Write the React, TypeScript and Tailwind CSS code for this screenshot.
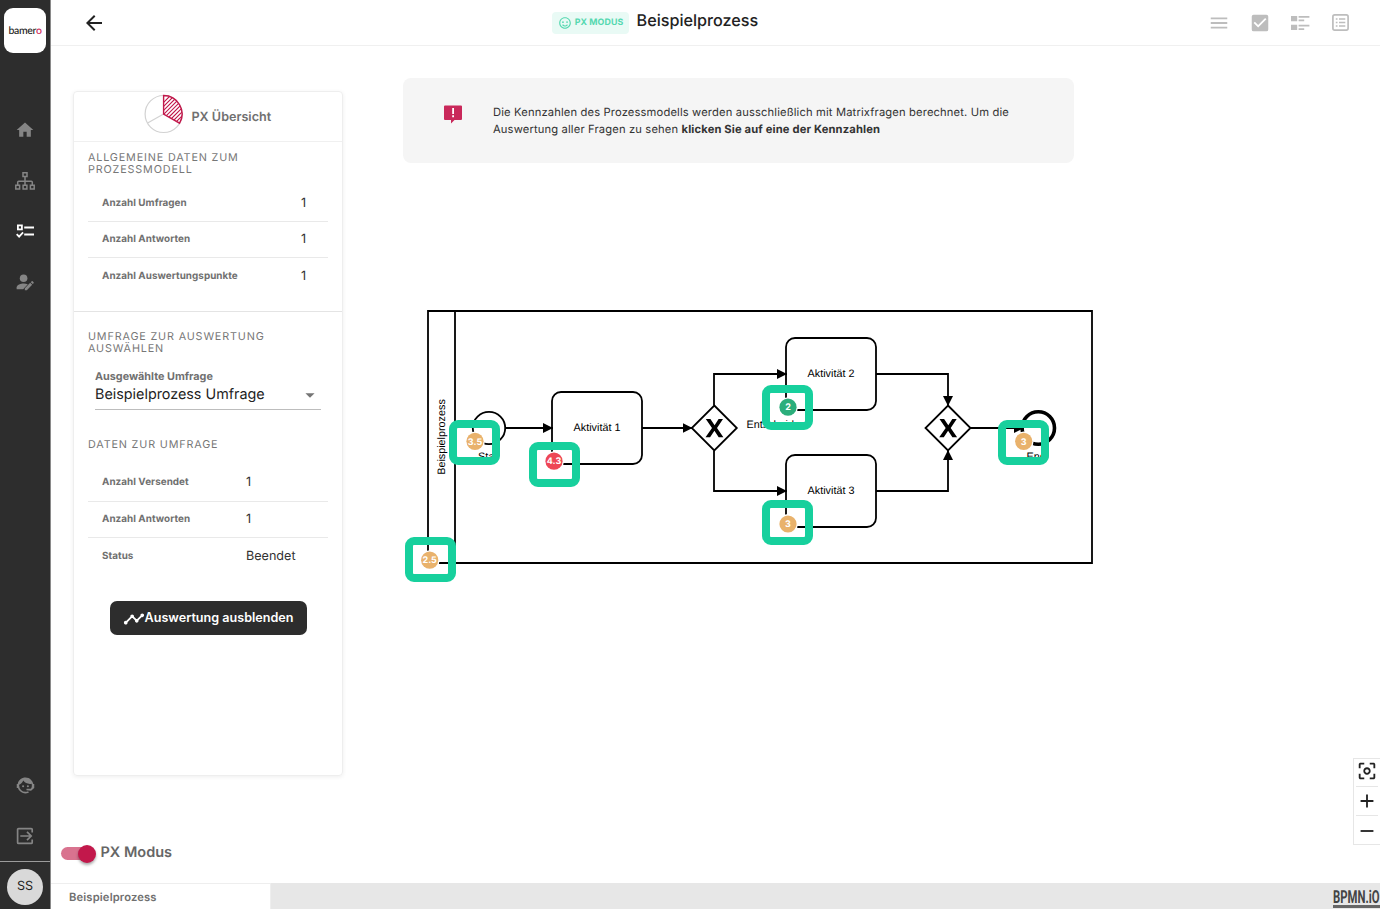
import React from "react";
import {
  MdArrowBack, MdMenu, MdCheckBox, MdHome, MdTimeline,
  MdCenterFocusWeak, MdAdd, MdRemove, MdArrowDropDown,
} from "react-icons/md";
import { BiSmile } from "react-icons/bi";

function SitemapIcon() {
  return (
    <svg width="20" height="18" viewBox="0 0 20 18" fill="none" stroke="currentColor" strokeWidth="1.500">
      <path d="M8 .8h4v3.800H8zM.8 13.300h3.800v3.800H.8zM8.100 13.300h3.800v3.800H8.100zM15.400 13.300h3.800v3.800h-3.800z" />
      <path d="M10 4.600v8.700M2.700 13.300V10.200c0-.6.4-1 1-1h12.600c.6 0 1 .4 1 1v3.100" />
    </svg>
  );
}

function AgentIcon() {
  return (
    <svg width="21" height="21" viewBox="0 0 24 24" fill="currentColor">
      <path d="M18.720 14.760C19.070 13.910 19.260 13 19.260 12C19.260 11.280 19.150 10.590 18.960 9.950C18.310 10.100 17.630 10.180 16.920 10.180C13.860 10.180 11.150 8.670 9.500 6.340C8.610 8.500 6.910 10.260 4.770 11.220C4.730 11.470 4.730 11.740 4.730 12A7.270 7.270 0 0 0 12 19.270C13.050 19.270 14.060 19.040 14.970 18.630C15.540 19.720 15.800 20.260 15.780 20.260C14.140 20.810 12.870 21.080 12 21.080C9.580 21.080 7.270 20.130 5.570 18.420C4.530 17.380 3.760 16.110 3.330 14.730H2V10.180H3.090C3.930 6.040 7.600 2.920 12 2.920C14.400 2.920 16.710 3.870 18.420 5.580C19.690 6.840 20.540 8.450 20.890 10.180H22V14.730H21.940L18.380 18L13.080 17.400V15.730H17.910L18.720 14.760Z" />
      <circle cx="9.270" cy="12.910" r="1.200" />
      <circle cx="14.720" cy="12.910" r="1.200" />
    </svg>
  );
}

function ChecklistIcon() {
  return (
    <svg width="18" height="15" viewBox="0 0 18 15" fill="none" stroke="currentColor" className="text-white">
      <rect x="1.9" y="1.4" width="4" height="4" strokeWidth="1.8" />
      <path d="M8.2 3.4H18M8.2 10.6H18" strokeWidth="2" />
      <path d="M.7 10.2l2.4 2.4 4-4.3" strokeWidth="1.8" />
    </svg>
  );
}

function UserEditIcon() {
  return (
    <svg width="18" height="17" viewBox="0 0 18 17" fill="currentColor">
      <circle cx="7.6" cy="4.3" r="3.8" />
      <path d="M.6 15.2v-1.6C.6 10.700 5 9.400 7.600 9.400c1.300 0 2.900.3 4.200.9L7.200 15.200z" />
      <path d="M8.800 14.200l5.400-5.400 2 2-5.400 5.400h-2zM14.800 8.200l.9-.9c.3-.3.6-.3.9 0l1 1c.3.3.3.6 0 .9l-.9.9z" />
    </svg>
  );
}

function LogoutIcon() {
  return (
    <svg width="18" height="18" viewBox="0 0 18 18" fill="none" stroke="currentColor" strokeWidth="1.7">
      <path d="M16.200 5.500V2.600a1 1 0 0 0-1-1H2.600a1 1 0 0 0-1 1v12.800a1 1 0 0 0 1 1h12.600a1 1 0 0 0 1-1v-2.900" />
      <path d="M4.300 9H15M11 4.800L15.200 9 11 13.200" />
    </svg>
  );
}

function DetailListIcon() {
  return (
    <svg width="19" height="16" viewBox="0 0 19 16" fill="currentColor">
      <path d="M0 1h6.200v5.300H0zM0 9.700h6.200V15H0zM7.600 1h10.800v1.800H7.600zM7.600 4.500h5.600v1.800H7.600zM7.600 9.700h10.800v1.800H7.600zM7.600 13.200h5.600V15H7.600z" />
    </svg>
  );
}

function ListBoxIcon() {
  return (
    <svg width="17" height="17" viewBox="0 0 17 17" fill="none" stroke="currentColor" strokeWidth="1.700">
      <rect x=".9" y=".9" width="15.200" height="15.200" rx="1.800" />
      <path d="M3.800 5h1.700M3.800 8.500h1.700M3.800 12h1.700M7 5h6.300M7 8.500h6.300M7 12h6.300" />
    </svg>
  );
}

function PieIcon() {
  return (
    <svg width="40" height="40" viewBox="0 0 40 40" fill="none">
      <defs>
        <clipPath id="slice"><path d="M19.800 20V1.600A18.400 18.400 0 0 1 35.800 29z" /></clipPath>
      </defs>
      <circle cx="19.600" cy="20" r="18.500" stroke="#d2d2d2" strokeWidth="1.200" />
      <path d="M19.600 20L3.600 29" stroke="#d2d2d2" strokeWidth="1.200" />
      <g clipPath="url(#slice)" stroke="#c2184b" strokeWidth="1.200">
        <path d="M14 14L32-4M14 18L36-4M14 22L40-4M15 25L41-1M17 27L42 2M20 28L43 5M23 29L44 8M26 30L45 11M29 31L46 14" />
      </g>
      <path d="M19.600 20V1.500A18.500 18.500 0 0 1 35.600 29.200z" stroke="#c2184b" strokeWidth="1.400" />
    </svg>
  );
}

function Sidebar() {
  return (
    <aside className="flex w-[51px] shrink-0 flex-col items-center border-r border-[#8a8a8a] bg-[#2d2d2d] text-[#858585]">
      <div className="mt-2 flex h-[45px] w-[42px] items-center justify-center rounded-[9px] bg-white pt-[2px] font-['Lato'] text-[10.500px] leading-none font-medium tracking-[-0.300px] text-[#222]">
        <span>bamer<span className="text-[#d0275a]">o</span></span>
      </div>
      <MdHome className="mt-[67px] size-5" />
      <div className="mt-[32px] mb-px h-[18px]"><SitemapIcon /></div>
      <div className="mt-[33px] h-[15px]"><ChecklistIcon /></div>
      <div className="mt-[35px] h-[17px]"><UserEditIcon /></div>
      <div className="flex-1" />
      <div className="h-[21px]"><AgentIcon /></div>
      <div className="mt-[31px] mb-[16px] h-[18px]"><LogoutIcon /></div>
      <div className="flex h-[48px] w-full items-center justify-center border-t border-[#9b9b9b]">
        <div className="mt-[2px] flex size-9 items-center justify-center rounded-full bg-[#d9d9d9] pt-[2px] text-[12.600px] text-[#222]">SS</div>
      </div>
    </aside>
  );
}

function Header() {
  return (
    <header className="flex h-[46px] shrink-0 items-center border-b border-[#f0f0f0]">
      <MdArrowBack className="ml-[31px] size-6 text-[#222]" />
      <div className="ml-[446px] flex h-[22px] w-[77px] items-center justify-center gap-[3px] rounded-[4px] bg-[#e9faf5] text-[8.800px] font-bold tracking-[0.100px] text-[#55d8b0]">
        <BiSmile className="size-[14px]" />PX MODUS
      </div>
      <h1 className="mb-[5px] ml-[7.500px] text-[16.200px] font-medium leading-6 text-[#222]">Beispielprozess</h1>
      <div className="mr-[31px] ml-auto flex items-center text-[#bdbdbd]">
        <MdMenu className="mr-[19px] size-[22px]" />
        <MdCheckBox className="mr-[20px] size-[22px]" />
        <DetailListIcon />
        <div className="ml-[22px] h-[17px]"><ListBoxIcon /></div>
      </div>
    </header>
  );
}

function Row({ label, value, right, last }: { label: string; value: string; right?: boolean; last?: boolean }) {
  return (
    <div className={`flex h-[36.300px] items-center pl-[14px] ${last ? "" : "border-b border-[#e9e9e9]"}`}>
      <span className="w-[144px] text-[9.900px] font-bold tracking-[0.040px] text-[#707070]">{label}</span>
      <span className={`pt-[2px] text-[12.600px] text-[#333] ${right ? "ml-auto mr-[22px]" : ""}`}>{value}</span>
    </div>
  );
}

function SectionTitle({ children }: { children: React.ReactNode }) {
  return <h3 className="text-[10.800px] leading-[12.600px] tracking-[0.840px] text-[#777]">{children}</h3>;
}

function Panel() {
  return (
    <section className="mt-[45px] ml-[22px] flex h-[685px] w-[270px] flex-col rounded-[4px] border border-[#eeeeee] shadow-[0_1px_4px_rgba(0,0,0,0.07)]">
      <div className="flex h-[50px] items-center border-b border-[#f0f0f0] pl-[70px]">
        <div className="mb-[5px] h-10"><PieIcon /></div>
        <h2 className="mt-[3px] ml-[7.500px] text-[12.600px] font-semibold text-[#707070]">PX Übersicht</h2>
      </div>
      <div className="h-[170px] border-b border-[#e4e4e4] px-[14px] pt-[9.600px]">
        <SectionTitle>ALLGEMEINE DATEN ZUM<br />PROZESSMODELL</SectionTitle>
        <div className="mt-[9px]">
          <Row label="Anzahl Umfragen" value="1" right />
          <Row label="Anzahl Antworten" value="1" right />
          <Row label="Anzahl Auswertungspunkte" value="1" right last />
        </div>
      </div>
      <div className="flex flex-col px-[14px] pt-[18.600px]">
        <SectionTitle>UMFRAGE ZUR AUSWERTUNG<br />AUSWÄHLEN</SectionTitle>
        <div className="mt-[14.400px] mr-[7px] ml-[7px] flex h-[40px] flex-col border-b border-[#bdbdbd]">
          <span className="text-[10.800px] leading-[14px] font-bold text-[#707070]">Ausgewählte Umfrage</span>
          <div className="flex items-center justify-between text-[14.350px] leading-[22px] text-[#222]">
            Beispielprozess Umfrage
            <MdArrowDropDown className="size-[22px] text-[#757575]" />
          </div>
        </div>
        <div className="mt-[28.600px]"><SectionTitle>DATEN ZUR UMFRAGE</SectionTitle></div>
        <div className="mt-[13.900px]">
          <Row label="Anzahl Versendet" value="1" />
          <Row label="Anzahl Antworten" value="1" />
          <Row label="Status" value="Beendet" last />
        </div>
        <button className="mt-[27.300px] flex h-[34px] w-[197px] items-center justify-center self-center rounded-[7px] bg-[#2d2d2d] pt-px text-[12.600px] font-semibold text-white">
          <MdTimeline className="size-[22px]" />Auswertung ausblenden
        </button>
      </div>
    </section>
  );
}

function Task({ x, y, label }: { x: number; y: number; label: string }) {
  return (
    <g>
      <rect x={x} y={y} width="90" height="72" rx="9" fill="#fff" stroke="#000" strokeWidth="1.800" />
      <text x={x + 45} y={y + 39} textAnchor="middle">{label}</text>
    </g>
  );
}

function Gateway({ x }: { x: number }) {
  return (
    <g>
      <path d={`M${x} 405.500l22.500 22.500-22.500 22.500-22.500-22.500z`} fill="#fff" stroke="#000" strokeWidth="1.800" />
      <path d={`M${x - 8.500} 419h4.600l4.200 6.300 4-6.300h4.400l-6 9 6.400 9.200h-4.700l-4.300-6.500-4.300 6.500h-4.600l6.500-9.200z`} fill="#000" />
    </g>
  );
}

const badges = [
  { x: 449, y: 420, cx: 475, cy: 441.300, color: "#e9b26c", value: "3.5" },
  { x: 529, y: 442, cx: 554, cy: 461.200, color: "#ee4756", value: "4.3" },
  { x: 405, y: 537, cx: 429.700, cy: 560.200, color: "#e9b26c", value: "2.5" },
  { x: 762, y: 385, cx: 788, cy: 407.200, color: "#2bae7b", value: "2" },
  { x: 762, y: 500, cx: 788, cy: 524, color: "#e9b26c", value: "3" },
  { x: 998, y: 420, cx: 1023.700, cy: 441.300, color: "#e9b26c", value: "3" },
];

function Diagram() {
  return (
    <svg width="700" height="290" viewBox="403 300 700 290" className="font-['Liberation_Sans'] text-[10.800px]">
      <defs>
        <marker id="arrow" viewBox="0 0 10 10" refX="10" refY="5" markerWidth="10" markerHeight="10" markerUnits="userSpaceOnUse" orient="auto">
          <path d="M0 0L10 5 0 10z" />
        </marker>
        <clipPath id="labels">
          <path d="M460 445H496V462H460zM740 415H795V429H740zM1010 445H1049V459H1010z" />
        </clipPath>
      </defs>
      <path d="M428 311H1092V563H428zM455 311V563" fill="none" stroke="#000" strokeWidth="1.800" />
      <text transform="translate(445 437) rotate(-90)" textAnchor="middle">Beispielprozess</text>
      <circle cx="489" cy="428" r="16.200" fill="#fff" stroke="#000" strokeWidth="1.800" />
      <Task x={552} y={392} label="Aktivität 1" />
      <Task x={786} y={338} label="Aktivität 2" />
      <Task x={786} y={455} label="Aktivität 3" />
      <Gateway x={714.300} />
      <Gateway x={948} />
      <circle cx="1038.300" cy="428" r="16.200" fill="#fff" stroke="#000" strokeWidth="3.600" />
      <g clipPath="url(#labels)">
        <text x="478" y="460">Start</text>
        <text x="746.500" y="428">Entscheidung</text>
        <text x="1026.500" y="460">Ende</text>
      </g>
      <g fill="none" stroke="#000" strokeWidth="1.800">
        <path d="M505 428H553" markerEnd="url(#arrow)" />
        <path d="M642 428H692.500" markerEnd="url(#arrow)" />
        <path d="M714 405.500V374H787" markerEnd="url(#arrow)" />
        <path d="M714 450.500V491H787" markerEnd="url(#arrow)" />
        <path d="M876 374H948V406" markerEnd="url(#arrow)" />
        <path d="M876 491H948V450" markerEnd="url(#arrow)" />
        <path d="M970.500 428H1024" markerEnd="url(#arrow)" />
      </g>
      {badges.map((b) => (
        <g key={`${b.x}-${b.y}`}>
          <circle cx={b.cx} cy={b.cy} r="9.900" fill="#fff" />
          <circle cx={b.cx} cy={b.cy} r="8.600" fill={b.color} />
          <text x={b.cx} y={b.cy + 3.200} textAnchor="middle" fill="#fff" className="font-['Inter'] text-[9px] font-bold">{b.value}</text>
          <rect x={b.x + 4} y={b.y + 4} width="43" height="37" rx="5" fill="none" stroke="#17d09d" strokeWidth="8" />
        </g>
      ))}
    </svg>
  );
}

function Notice() {
  return (
    <div className="mt-[32px] ml-[9px] flex h-[85px] w-[671px] items-start rounded-[8px] bg-[#f5f5f5] pl-[41px] pt-[26px]">
      <svg width="18" height="19" viewBox="0 0 18 19" className="mt-px shrink-0">
        <path d="M1 .5h16a1 1 0 0 1 1 1V14a1 1 0 0 1-1 1h-6.500L7 18.500V15H1a1 1 0 0 1-1-1V1.500a1 1 0 0 1 1-1z" fill="#c9285a" />
        <path d="M8.200 3h1.800v6H8.200zM8.200 10.300h1.800v1.900H8.200z" fill="#fff" />
      </svg>
      <p className="ml-[31px] text-[11.200px] leading-[17px] tracking-[0.145px] text-[#333]">
        Die Kennzahlen des Prozessmodells werden ausschließlich mit Matrixfragen berechnet. Um die<br />
        Auswertung aller Fragen zu sehen <b>klicken Sie auf eine der Kennzahlen</b>
      </p>
    </div>
  );
}

export default function App() {
  return (
    <div className="flex h-[909px] w-[1380px] overflow-hidden bg-white font-['Inter',sans-serif] [text-rendering:geometricPrecision]">
      <Sidebar />
      <div className="flex min-w-0 flex-1 flex-col">
        <Header />
        <div className="flex min-h-0 flex-1">
          <div className="w-[343px] shrink-0">
            <Panel />
            <div className="mt-[65px] ml-[10px] flex h-[22px] items-center">
              <div className="mt-[3px] flex h-[13px] w-[34px] items-center justify-end rounded-full bg-[#d9738f]">
                <div className="-mr-px size-[18px] rounded-full bg-[#c2184b] shadow-[0_2px_3px_rgba(0,0,0,0.35)]" />
              </div>
              <span className="mt-px ml-[5.500px] text-[14.500px] leading-5 font-semibold text-[#666]">PX Modus</span>
            </div>
          </div>
          <div className="min-w-0 flex-1">
            <Notice />
            <div className="mt-[137px] ml-[9px] h-[290px]"><Diagram /></div>
          </div>
          <div className="mb-[38px] flex h-[87px] w-[27px] shrink-0 flex-col self-end border border-r-0 border-[#e6e6e6] text-[#222]">
            <div className="mx-[2px] flex h-[28px] items-center justify-center border-b border-[#e6e6e6] pb-[2px]"><MdCenterFocusWeak className="size-[22px] shrink-0" /></div>
            <div className="mx-[2px] flex h-[30px] items-center justify-center border-b border-[#e6e6e6]"><MdAdd className="size-[22px] shrink-0" /></div>
            <div className="mx-[2px] flex h-[28px] items-center justify-center pt-[2px]"><MdRemove className="size-[22px] shrink-0" /></div>
          </div>
        </div>
        <footer className="flex h-[26px] shrink-0 bg-[#e7e7e7]">
          <div className="flex w-[220px] items-center border-t border-r border-[#eeeeee] bg-white pt-[2px] pl-[18px] text-[11.200px] font-semibold tracking-[0.150px] text-[#707070]">Beispielprozess</div>
          <div className="mt-[5px] ml-auto h-[20px] w-[47px] border-b-[3px] border-[#666] text-[#444]">
            <svg width="47" height="17" viewBox="0 0 47 17" fill="currentColor">
              <text x="0" y="14.500" textLength="46.500" lengthAdjust="spacingAndGlyphs" className="font-['Roboto'] text-[18px] font-bold">BPMN.iO</text>
            </svg>
          </div>
        </footer>
      </div>
    </div>
  );
}
